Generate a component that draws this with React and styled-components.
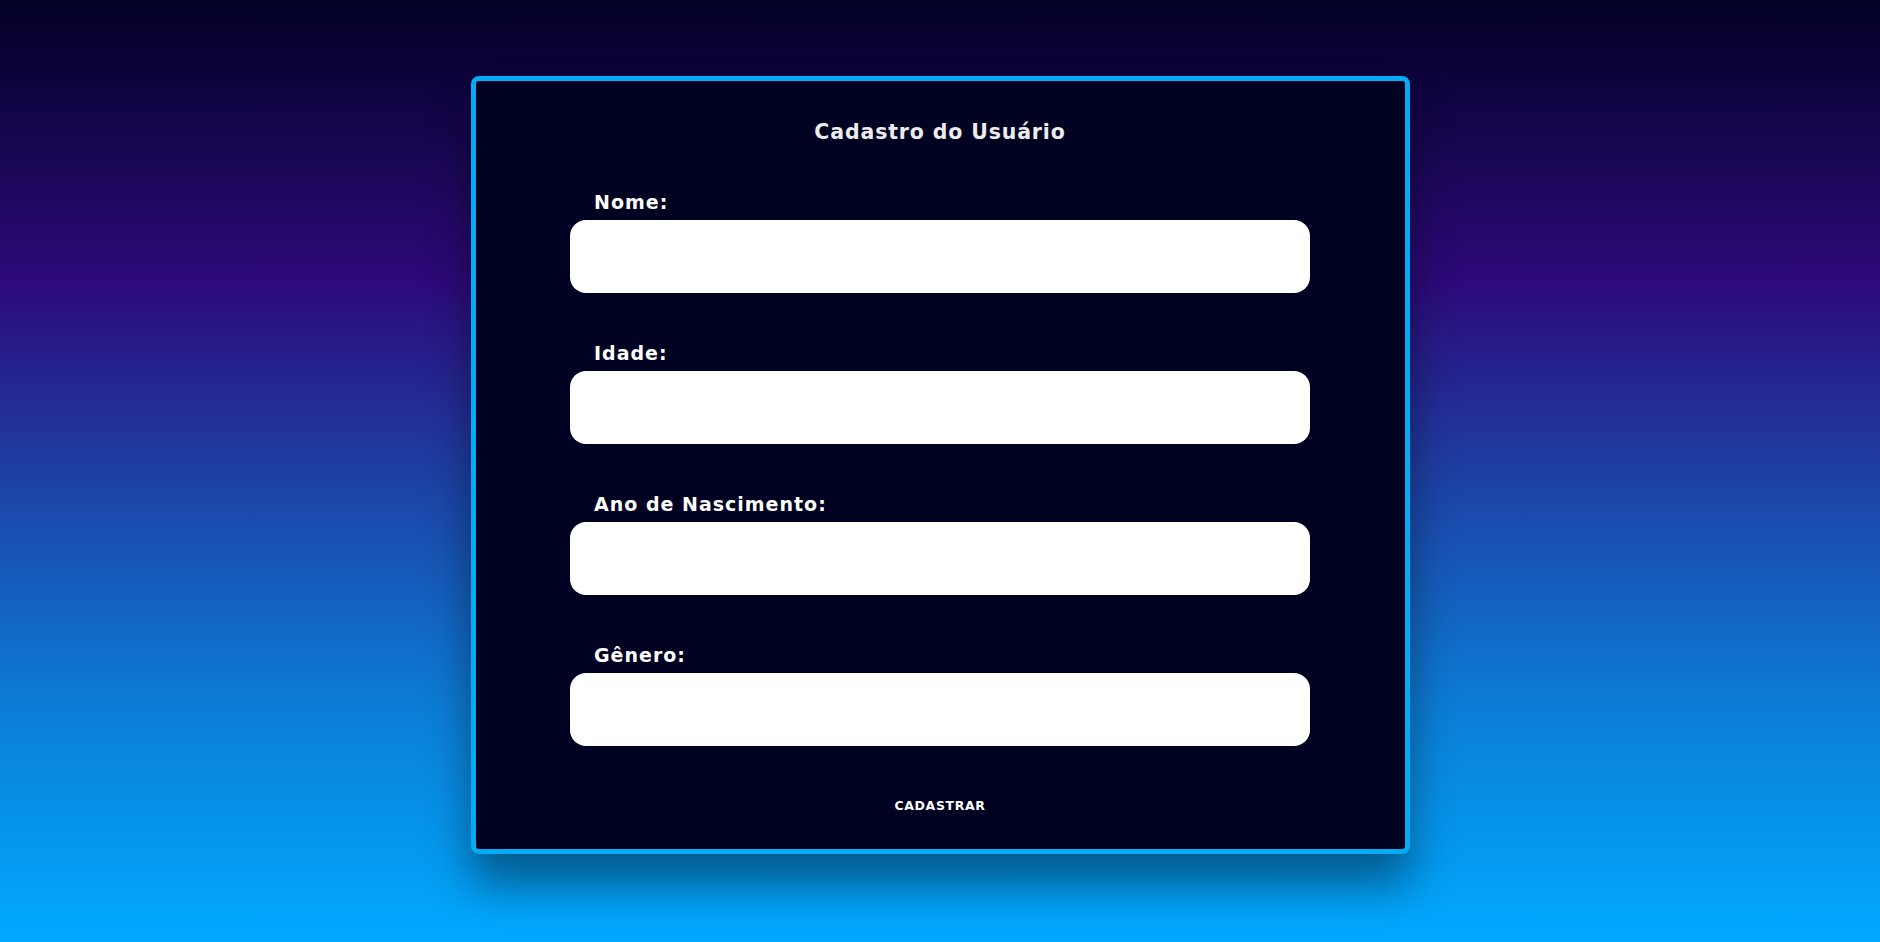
import React from "react";
import styled, { createGlobalStyle } from "styled-components";

const GlobalStyle = createGlobalStyle`
  * { box-sizing: border-box; }
  html, body { margin: 0; padding: 0; }
  body {
    min-height: 942px;
    font-family: "DejaVu Sans", "Open Sans", sans-serif;
    background: linear-gradient(180deg, #020125 0%, #2c0a7a 30%, #1c44a8 52%, #0c7dd6 75%, #00aaff 100%);
    background-repeat: no-repeat;
  }
`;

const Page = styled.main`
  min-height: 942px;
  display: flex;
  justify-content: center;
  align-items: flex-start;
  padding-top: 76px;
`;

const Card = styled.form`
  width: 939px;
  height: 778px;
  border: 5px solid #04abf5;
  border-radius: 8px;
  background: #000222;
  box-shadow: 0 30px 45px rgba(0, 0, 0, 0.42);
  display: flex;
  flex-direction: column;
  align-items: center;
  padding: 39px 0 0;
`;

const Title = styled.h1`
  margin: 0 0 46px;
  font-size: 20.5px;
  line-height: 24px;
  font-weight: 700;
  letter-spacing: 0.85px;
  color: #ececec;
`;

const Fields = styled.div`
  width: 740px;
  display: flex;
  flex-direction: column;
  gap: 48px;
`;

const Field = styled.div`
  display: flex;
  flex-direction: column;
  gap: 6px;
`;

const Label = styled.label`
  margin-left: 24px;
  font-size: 19px;
  line-height: 24px;
  font-weight: 700;
  letter-spacing: 1px;
  color: #ffffff;
`;

const Input = styled.input`
  width: 100%;
  height: 73px;
  border: none;
  border-radius: 16px;
  background: #ffffff;
  outline: none;
  padding: 0 20px;
  font-size: 18px;
`;

const Submit = styled.button`
  margin-top: 53px;
  border: none;
  background: transparent;
  padding: 0;
  font-family: "DejaVu Sans", "Open Sans", sans-serif;
  font-size: 12.5px;
  line-height: 14px;
  font-weight: 700;
  letter-spacing: 0.65px;
  color: #ffffff;
  cursor: pointer;
`;

const fields = [
  { id: "nome", label: "Nome:" },
  { id: "idade", label: "Idade:" },
  { id: "ano", label: "Ano de Nascimento:" },
  { id: "genero", label: "Gênero:" },
];

export default function App() {
  return (
    <>
      <GlobalStyle />
      <Page>
        <Card onSubmit={(e) => e.preventDefault()}>
          <Title>Cadastro do Usuário</Title>
          <Fields>
            {fields.map((f) => (
              <Field key={f.id}>
                <Label htmlFor={f.id}>{f.label}</Label>
                <Input id={f.id} type="text" />
              </Field>
            ))}
          </Fields>
          <Submit type="submit">CADASTRAR</Submit>
        </Card>
      </Page>
    </>
  );
}
